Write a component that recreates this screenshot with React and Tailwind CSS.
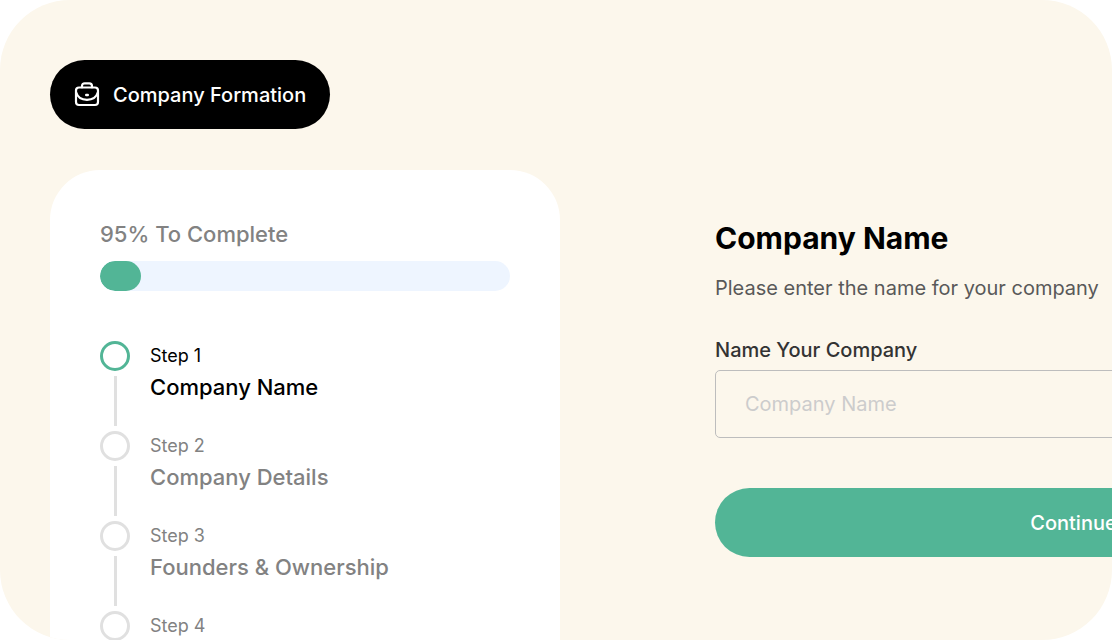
const steps = [
  { label: "Step 1", title: "Company Name", active: true },
  { label: "Step 2", title: "Company Details" },
  { label: "Step 3", title: "Founders & Ownership" },
  { label: "Step 4" },
];

function BriefcaseIcon() {
  return (
    <svg
      aria-hidden="true"
      className="size-[26px] shrink-0"
      viewBox="0 0 26 26"
      fill="none"
      stroke="currentColor"
      strokeWidth="2.2"
      strokeLinecap="round"
      strokeLinejoin="round"
    >
      <rect x="2" y="5.500" width="22" height="17.500" rx="3" />
      <path d="M8 5.300V4c0-1.700 1-2.700 2.700-2.700h4.600C17 1.300 18 2.300 18 4v1.300" />
      <path d="M2.200 10.500C3.600 15.200 8 17.800 13 17.800s9.400-2.600 10.800-7.300" />
      <path d="M12.200 13h1.600" strokeWidth="2.400" />
    </svg>
  );
}

function Step({ step, last }) {
  return (
    <li className="flex gap-5">
      <div className="flex flex-col items-center gap-[5px] pb-[5px]">
        <span
          className={
            step.active
              ? "size-[30px] rounded-full border-[3px] border-[#52b596]"
              : "size-[30px] rounded-full border-[3px] border-[#e0e0e0]"
          }
        />
        {!last && <span className="h-[50px] w-[3px] bg-[#e0e0e0]" />}
      </div>
      <div className={step.active ? "text-black" : "text-[#828282]"}>
        <p className="text-lg leading-[30px]">{step.label}</p>
        {step.title && (
          <p className="text-[22px] leading-8 font-medium">{step.title}</p>
        )}
      </div>
    </li>
  );
}

export default function App() {
  return (
    <main className="h-screen overflow-hidden rounded-[70px] bg-[#fcf7ec] px-[50px] pt-[60px] font-['Inter',sans-serif]">
      <button
        type="button"
        className="flex h-[69px] items-center gap-[13px] rounded-full bg-black px-6 text-xl font-medium text-white"
      >
        <BriefcaseIcon />
        Company Formation
      </button>

      <div className="mt-[41px] flex items-start gap-[155px]">
        <section className="w-[510px] shrink-0 rounded-[50px] bg-white p-[50px]">
          <p id="progress-label" className="text-[22px] leading-7 font-medium text-[#828282]">
            95% To Complete
          </p>
          <div
            role="progressbar"
            aria-labelledby="progress-label"
            aria-valuenow={10}
            aria-valuemin={0}
            aria-valuemax={100}
            className="mt-[13px] h-[30px] overflow-hidden rounded-full bg-[#eef5ff]"
          >
            <div className="h-full w-1/10 rounded-full bg-[#52b596]" />
          </div>
          <ol className="mt-[50px]">
            {steps.map((step, i) => (
              <Step key={step.label} step={step} last={i === steps.length - 1} />
            ))}
          </ol>
        </section>

        <form className="min-w-[717px] flex-1 pt-12" onSubmit={(e) => e.preventDefault()}>
          <h1 className="text-[30px] leading-10 font-bold text-black">Company Name</h1>
          <p className="mt-4 text-xl leading-7 text-[#595959]">
            Please enter the name for your company
          </p>
          <label
            htmlFor="company-name"
            className="mt-[34px] block text-xl leading-7 font-medium text-[#333333]"
          >
            Name Your Company
          </label>
          <input
            id="company-name"
            type="text"
            placeholder="Company Name"
            className="mt-[6px] block h-[68px] w-full rounded-[5px] border border-[#bdbdbd] bg-transparent px-[29px] text-xl text-[#333333] outline-none placeholder:text-[#cccccc]"
          />
          <button
            type="submit"
            className="mt-[50px] h-[69px] w-full rounded-full bg-[#52b596] text-xl font-medium text-white"
          >
            Continue
          </button>
        </form>
      </div>
    </main>
  );
}
